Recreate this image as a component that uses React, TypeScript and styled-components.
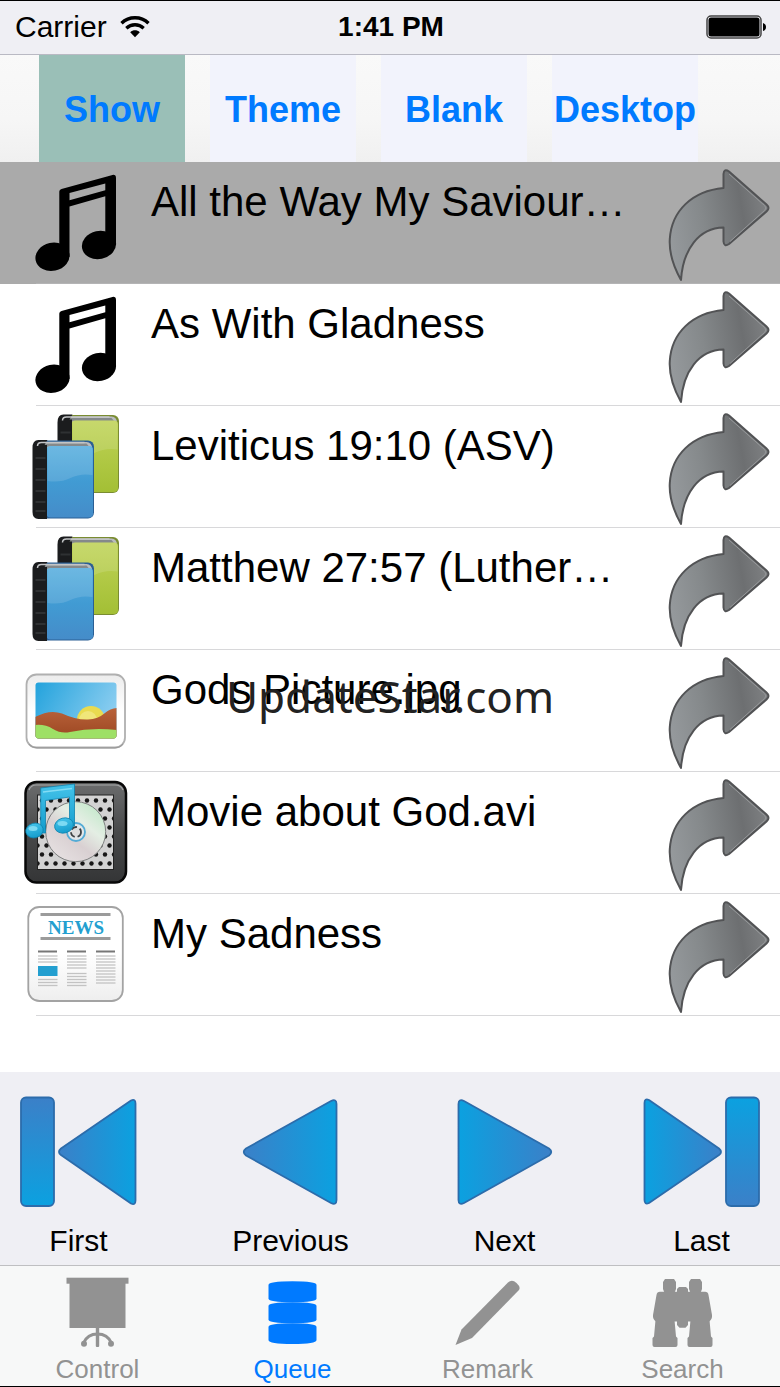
import React from "react";
import styled, { createGlobalStyle } from "styled-components";

const GlobalStyle = createGlobalStyle`
  *, *::before, *::after { box-sizing: border-box; }
  body { margin: 0; background: #fff; }
  button { font: inherit; color: inherit; border: 0; margin: 0; padding: 0; background: none; cursor: pointer; }
  svg { display: block; flex: none; }
`;

const Screen = styled.div`
  position: relative;
  display: flex;
  flex-direction: column;
  min-height: 100vh;
  border-top: 1px solid #000;
  border-bottom: 1px solid #000;
  background: #fff;
  color: #000;
  font-family: "Liberation Sans", Arial, sans-serif;
`;

const StatusBar = styled.header`
  display: grid;
  grid-template-columns: 1fr auto 1fr;
  align-items: center;
  height: 54px;
  padding: 0 13px 2px 15px;
  background: #efeff4;
  border-bottom: 1px solid #b9b9c3;
`;

const Carrier = styled.span`
  display: flex;
  align-items: center;
  gap: 13px;
  font-size: 30px;
  line-height: 36px;
`;

const Clock = styled.time`
  font-size: 28px;
  line-height: 36px;
  font-weight: bold;
`;

const BatterySlot = styled.span`
  justify-self: end;
`;

const ModeBar = styled.nav`
  display: grid;
  grid-template-columns: repeat(4, minmax(0, 146px));
  column-gap: 25px;
  height: 107px;
  padding: 0 39px;
  background: linear-gradient(#f9f9f9, #f6f6f6 60%, #f0f0f0);
`;

const ModeButton = styled.button<{ $active?: boolean }>`
  padding-top: 2px;
  color: #007aff;
  font-size: 36px;
  font-weight: bold;
  background: ${(p) => (p.$active ? "#9abfb7" : "#f2f3fc")};
`;

const Queue = styled.ul`
  flex: 1;
  margin: 0;
  padding: 0 0 56px;
  list-style: none;
`;

const QueueRow = styled.li<{ $selected?: boolean }>`
  position: relative;
  display: flex;
  height: 122px;
  padding: 0 6px 0 16px;
  background: ${(p) => (p.$selected ? "#aaaaaa" : "#fff")};

  &::after {
    content: "";
    position: absolute;
    left: 36px;
    right: 0;
    bottom: 0;
    height: 1px;
    background: ${(p) => (p.$selected ? "#b4b4b5" : "#d8d8da")};
  }
`;

const ItemButton = styled.button`
  flex: 1;
  min-width: 0;
  display: flex;
  align-items: flex-start;
  gap: 15px;
  text-align: left;
`;

const ItemTitle = styled.span`
  padding-top: 16px;
  font-size: 42px;
  line-height: 48px;
  white-space: nowrap;
  overflow: hidden;
  text-overflow: ellipsis;
`;

const Player = styled.section`
  display: grid;
  grid-template-columns: 212fr 214fr 197fr 117fr;
  justify-items: start;
  padding: 24px 20px 6px;
  background: #efeff4;
`;

const PlayerButton = styled.button`
  display: flex;
  flex-direction: column;
  align-items: center;
  gap: 15px;
  font-size: 30px;
  line-height: 36px;
`;

const TabBar = styled.nav`
  display: grid;
  grid-template-columns: repeat(4, 1fr);
  padding: 4px 0 2px;
  background: #f7f8f8;
  border-top: 1px solid #bfbfc2;
`;

const Tab = styled.button<{ $active?: boolean }>`
  display: flex;
  flex-direction: column;
  align-items: center;
  gap: 4px;
  color: ${(p) => (p.$active ? "#007aff" : "#929292")};
  font-size: 26px;
  line-height: 30px;
`;

const Watermark = styled.div`
  position: absolute;
  top: 50%;
  left: 0;
  right: 0;
  transform: translateY(-50%);
  padding-top: 4px;
  text-align: center;
  font-family: "Noto Sans", "Open Sans", sans-serif;
  font-size: 44px;
  line-height: 60px;
  color: #222;
  pointer-events: none;
`;

const WifiIcon = () => (
  <svg width="30" height="24" viewBox="0 0 30 24" fill="none" stroke="#000" aria-hidden="true">
    <path d="M1.500 8.200C9 .9 21 .9 28.500 8.200" strokeWidth="3.400" />
    <path d="M6.300 13.200c5-4.600 12.400-4.600 17.400 0" strokeWidth="3.300" />
    <path d="M10.200 17.200c2.900-2.500 6.700-2.500 9.600 0L15 22.300z" fill="#000" stroke="none" />
  </svg>
);

const BatteryIcon = () => (
  <svg width="61" height="26" viewBox="0 0 61 26" aria-hidden="true">
    <rect x="1" y="2" width="54" height="22" rx="4" fill="#efeff4" stroke="#444" strokeWidth="1.500" />
    <rect x="2.500" y="3.500" width="51" height="19" rx="2.500" />
    <path d="M57 9q3 1 3 4t-3 4z" />
  </svg>
);

const ArrowIcon = () => (
  <svg width="110" height="121" viewBox="664 1 110 121" aria-hidden="true">
    <defs>
      <linearGradient id="arrow" x1="0" y1="0.600" x2="1" y2="0.400">
        <stop offset="0" stopColor="#95999c" />
        <stop offset="0.350" stopColor="#85898b" />
        <stop offset="0.750" stopColor="#6d6f71" />
        <stop offset="1" stopColor="#7e8082" />
      </linearGradient>
    </defs>
    <path
      d="M681 118C672 102 669 90 669.800 77C671.500 49 692 29 723.500 26V12Q724 6 729 9.500L766.500 42.500Q770.500 46 766.500 49.500L729 82Q724 85.500 723.500 79.500V65.500C699 66 683 87 681 118Z"
      fill="url(#arrow)"
      stroke="#525355"
      strokeWidth="2"
      strokeLinejoin="round"
    />
    <path d="M730 79.500L764.500 48.500Q767.500 46 764.500 43.500L729 12" fill="none" stroke="#97999b" strokeWidth="1" />
  </svg>
);

const MusicIcon = () => (
  <svg width="120" height="121" viewBox="16 0 120 121" aria-hidden="true">
    <path
      fillRule="evenodd"
      d="M59.300 29.500Q59.300 27.500 61.500 27L112.500 12.900Q116 12.400 116 15.900V83H105.300V34.200L69.500 44.400V95H59.300ZM69.500 31L105.300 21.600V28.200L69.500 38.200Z"
    />
    <ellipse cx="52.500" cy="94.800" rx="17.200" ry="14" transform="rotate(-12 52.500 94.800)" />
    <ellipse cx="99" cy="83" rx="17.200" ry="14" transform="rotate(-12 99 83)" />
  </svg>
);

const Book = ({ x, y, fill, edge }: { x: number; y: number; fill: string; edge: string }) => (
  <g transform={`translate(${x} ${y})`}>
    <rect x="0.500" y="0.500" width="61" height="78" rx="6" fill={edge} />
    <path d="M5 4Q6 2 9 2H54Q59 2 60 9H5z" fill="#b9bcbe" />
    <path d="M9 3.500H54L57 7H8z" fill="#85898b" />
    <rect x="14" y="6" width="46.500" height="71.500" rx="4" fill={`url(#${fill})`} />
    <path d="M15 41Q28 43 38 38T60 35V11Q60 6 56 6H15z" fill="#fff" opacity="0.130" />
    <path d="M6 0H15L12 5H14.500V79H6Q0 79 0 72V8Q0 0 6 0Z" fill="#1b1c1e" />
    <path d="M3 18H13M3 29H13M3 40H13M3 51H13M3 62H13M3 71H13" stroke="#2f3133" strokeWidth="2" />
    <path d="M5 6Q5 2.500 9 2.500H52" fill="none" stroke="#c3c5c7" strokeWidth="1.500" />
  </g>
);

const BooksIcon = () => (
  <svg width="120" height="121" viewBox="16 0 120 121" aria-hidden="true">
    <defs>
      <linearGradient id="green" x1="0" y1="0" x2="0" y2="1">
        <stop offset="0" stopColor="#bfd356" />
        <stop offset="1" stopColor="#a3bf35" />
      </linearGradient>
      <linearGradient id="blue" x1="0" y1="0" x2="0" y2="1">
        <stop offset="0" stopColor="#56aede" />
        <stop offset="0.500" stopColor="#419bd3" />
        <stop offset="1" stopColor="#458cc9" />
      </linearGradient>
    </defs>
    <Book x={57.5} y={8.5} fill="green" edge="#7a8c31" />
    <Book x={32.5} y={34} fill="blue" edge="#2b5f94" />
  </svg>
);

const PictureIcon = () => (
  <svg width="120" height="121" viewBox="16 0 120 121" aria-hidden="true">
    <defs>
      <linearGradient id="sky" x1="0" y1="0" x2="1" y2="0.400">
        <stop offset="0" stopColor="#22a2dc" />
        <stop offset="1" stopColor="#8acdf0" />
      </linearGradient>
      <linearGradient id="hill" x1="0" y1="0" x2="0" y2="1">
        <stop offset="0" stopColor="#b9623a" />
        <stop offset="1" stopColor="#9a4520" />
      </linearGradient>
      <linearGradient id="frame" x1="0" y1="0" x2="0" y2="1">
        <stop offset="0" stopColor="#ececec" />
        <stop offset="0.500" stopColor="#fff" />
      </linearGradient>
      <clipPath id="photo">
        <rect x="35.500" y="32.500" width="81" height="56" rx="3" />
      </clipPath>
    </defs>
    <rect x="26.500" y="24.500" width="98.500" height="73" rx="10" fill="url(#frame)" stroke="#b0b0b0" strokeWidth="1.800" />
    <path d="M29 94Q32 97.800 37 97.800H115Q120 97.800 123 94" fill="none" stroke="#999" strokeWidth="1.200" />
    <g clipPath="url(#photo)">
      <rect x="35" y="32" width="82" height="57" fill="url(#sky)" />
      <circle cx="91" cy="70" r="14" fill="#e9db50" />
      <circle cx="88" cy="70" r="9" fill="#f0e67a" />
      <path d="M35 67Q50 59 62 63.500Q76 70 88 69.500Q98 69 105 63Q110 58.500 117 58V90H35z" fill="url(#hill)" />
      <path d="M35 75Q45 74 53 79T70 82Q92 77 117 80V90H35z" fill="#9ee065" />
    </g>
  </svg>
);

const MovieIcon = () => (
  <svg width="120" height="121" viewBox="16 0 120 121" aria-hidden="true">
    <defs>
      <linearGradient id="case" x1="0" y1="0" x2="0" y2="1">
        <stop offset="0" stopColor="#6c6d6e" />
        <stop offset="0.500" stopColor="#48494a" />
        <stop offset="1" stopColor="#343536" />
      </linearGradient>
      <linearGradient id="disc" x1="0.900" y1="0" x2="0.100" y2="1">
        <stop offset="0" stopColor="#bce7c5" />
        <stop offset="0.350" stopColor="#e4eee4" />
        <stop offset="0.600" stopColor="#d9d0d2" />
        <stop offset="1" stopColor="#e9e4e5" />
      </linearGradient>
      <linearGradient id="note" x1="0" y1="0" x2="0" y2="1">
        <stop offset="0" stopColor="#44c3ea" />
        <stop offset="1" stopColor="#149ccc" />
      </linearGradient>
      <pattern id="holes" x="37" y="23" width="9" height="18" patternUnits="userSpaceOnUse">
        <rect width="9" height="18" fill="#d2d2d2" />
        <circle cx="5" cy="5.500" r="2.200" fill="#171717" />
        <circle cx="0.500" cy="14.500" r="2.200" fill="#171717" />
        <circle cx="9.500" cy="14.500" r="2.200" fill="#171717" />
      </pattern>
    </defs>
    <rect x="25.500" y="10" width="100.500" height="100.500" rx="11" fill="url(#case)" stroke="#080808" strokeWidth="2.500" />
    <path d="M29 18Q31 13 36 13H115Q121 13 123 18" fill="none" stroke="#a4a5a6" strokeWidth="1.200" />
    <rect x="37.500" y="23" width="76" height="74.500" fill="url(#holes)" stroke="#222" />
    <circle cx="75.700" cy="59.700" r="30" fill="url(#disc)" stroke="#7e8080" />
    <circle cx="76" cy="60" r="9" fill="#e2e7ea" stroke="#54abd5" strokeWidth="1.800" />
    <circle cx="76" cy="60" r="5" fill="#ddd" stroke="#3d4144" strokeWidth="1.800" strokeDasharray="6 3" />
    <g fill="url(#note)" stroke="#0f83ae" strokeWidth="0.800">
      <path d="M40.700 16L74.500 12V54H69.500V25L45.500 28.500V61H40.700z" />
      <ellipse cx="34.500" cy="58.500" rx="8.800" ry="7.300" transform="rotate(-15 34.500 58.500)" />
      <ellipse cx="64" cy="53.500" rx="9.500" ry="7.500" transform="rotate(-15 64 53.500)" />
    </g>
    <path d="M43 20L72 16.500" stroke="#83dcf4" strokeWidth="1.500" />
    <ellipse cx="33" cy="56.500" rx="4.500" ry="2.500" fill="#7ddaf3" />
    <ellipse cx="62.500" cy="51.500" rx="5" ry="2.500" fill="#7ddaf3" />
  </svg>
);

const newsColumns = [
  { x: 38, rows: [62, 65, 68, 85.5, 88.5, 91.5] },
  { x: 67, rows: [62, 65, 68, 71, 74, 79.5, 82.5, 85.5, 88.5, 91.5] },
  { x: 96, rows: [62, 65, 68, 71, 74, 77, 80, 83, 86, 89] },
];

const NewsIcon = () => (
  <svg width="120" height="121" viewBox="16 0 120 121" aria-hidden="true">
    <defs>
      <linearGradient id="paper" x1="0" y1="0" x2="0" y2="1">
        <stop offset="0.500" stopColor="#fff" />
        <stop offset="1" stopColor="#eee" />
      </linearGradient>
    </defs>
    <rect x="28.300" y="13" width="94.500" height="94" rx="11" fill="url(#paper)" stroke="#a3a3a3" strokeWidth="1.800" />
    <path d="M40.500 20.500H110.500M40.500 44.500H110.500" stroke="#9b9b9b" strokeWidth="3" />
    <text x="76" y="40" textAnchor="middle" fontFamily="Liberation Serif, serif" fontWeight="bold" fontSize="19" fill="#239fd0">
      NEWS
    </text>
    {newsColumns.map((column) => (
      <g key={column.x} stroke="#c3c3c3" strokeWidth="1.300">
        <path d={`M${column.x} 57.500h19`} stroke="#777" strokeWidth="2" />
        {column.rows.map((y) => (
          <path key={y} d={`M${column.x} ${y}h19.500`} />
        ))}
      </g>
    ))}
    <rect x="38" y="72" width="19.500" height="10" fill="#239fd0" />
  </svg>
);

const PlayerGradients = () => (
  <defs>
    <linearGradient id="fadeLeft">
      <stop offset="0" stopColor="#3b80c8" />
      <stop offset="1" stopColor="#0ba1e0" />
    </linearGradient>
    <linearGradient id="fadeRight">
      <stop offset="0" stopColor="#0ba1e0" />
      <stop offset="1" stopColor="#3b80c8" />
    </linearGradient>
    <linearGradient id="fadeUp" x1="0" y1="0" x2="0" y2="1">
      <stop offset="0" stopColor="#3b80c8" />
      <stop offset="1" stopColor="#0ba1e0" />
    </linearGradient>
    <linearGradient id="fadeDown" x1="0" y1="0" x2="0" y2="1">
      <stop offset="0" stopColor="#0ba1e0" />
      <stop offset="1" stopColor="#3b80c8" />
    </linearGradient>
  </defs>
);

const PlayerSvg = ({ children }: { children: React.ReactNode }) => (
  <svg width="117" height="112" viewBox="0 0 117 112" stroke="#2c6cab" strokeWidth="1.800" strokeLinejoin="round" aria-hidden="true">
    <PlayerGradients />
    {children}
  </svg>
);

const FirstIcon = () => (
  <PlayerSvg>
    <rect x="1" y="1.500" width="33" height="108.500" rx="5" fill="url(#fadeUp)" />
    <path d="M41 52.500L111 4.500Q115.500 2.500 115.500 7.500V104.500Q115.500 109.500 111 107.500L41 59Q37 56 41 52.500Z" fill="url(#fadeLeft)" />
  </PlayerSvg>
);

const PreviousIcon = () => (
  <PlayerSvg>
    <path d="M14 52.500L99 5Q104.500 2.500 104.500 8V104Q104.500 109.500 99 107L14 59.500Q9.500 56 14 52.500Z" fill="url(#fadeLeft)" />
  </PlayerSvg>
);

const NextIcon = () => (
  <PlayerSvg>
    <path d="M103 52.500L18 5Q12.500 2.500 12.500 8V104Q12.500 109.500 18 107L103 59.500Q107.500 56 103 52.500Z" fill="url(#fadeRight)" />
  </PlayerSvg>
);

const LastIcon = () => (
  <PlayerSvg>
    <rect x="83" y="1.500" width="33" height="108.500" rx="5" fill="url(#fadeDown)" />
    <path d="M76 52.500L6 4Q1.500 2 1.500 7V104Q1.500 109 6 107L76 59Q80 56 76 52.500Z" fill="url(#fadeRight)" />
  </PlayerSvg>
);

const TabSvg = ({ children }: { children: React.ReactNode }) => (
  <svg width="80" height="80" viewBox="1 0 80 80" fill="currentColor" aria-hidden="true">
    {children}
  </svg>
);

const ControlIcon = () => (
  <TabSvg>
    <rect x="9.500" y="7.700" width="62" height="6" />
    <rect x="12.500" y="12" width="56" height="46" />
    <rect x="38.800" y="57" width="3.400" height="20" rx="1" />
    <path d="M26.500 73Q30.500 64 40.500 64T54.500 73" fill="none" stroke="currentColor" strokeWidth="3" />
    <circle cx="27" cy="73.800" r="3" />
    <circle cx="54" cy="73.800" r="3" />
  </TabSvg>
);

const QueueIcon = () => (
  <TabSvg>
    <path d="M16.500 15Q16.500 11.300 40.500 11.300T64.500 15V28.500Q64.500 32.300 40.500 32.300T16.500 28.500Z" />
    <path d="M16.500 36Q16.500 32.300 40.500 32.300T64.500 36V49.500Q64.500 53.300 40.500 53.300T16.500 49.500Z" />
    <path d="M16.500 57Q16.500 53.300 40.500 53.300T64.500 57V70Q64.500 74 40.500 74T16.500 70Z" />
  </TabSvg>
);

const RemarkIcon = () => (
  <TabSvg>
    <path d="M8.500 75L14.500 59.500L61 12.500Q65 9 69.500 13T72 20L25 68Z" />
  </TabSvg>
);

const SearchIcon = () => (
  <TabSvg>
    <path d="M23 9H32L34 12V19L32.500 23H22.500L21 19V12Z" />
    <path d="M49 9H58L60 12V19L58.500 23H48.500L47 19V12Z" />
    <path d="M37 17H44L46 19V24H35V19Z" />
    <path d="M18 21.700H63Q66 21.700 66.500 25L70 45Q70.500 49 67 51.500H14Q10.500 49 11 45L14.500 25Q15 21.700 18 21.700Z" />
    <path d="M13.500 50H32.500L34 66.500L35.500 68V75Q35.500 77 33.500 77H12.500Q10.500 77 10.500 75V68L12 66.500Z" />
    <path d="M48.500 50H67.500L69 66.500L70.500 68V75Q70.500 77 68.500 77H47.500Q45.500 77 45.500 75V68L47 66.500Z" />
    <path d="M35 50H46V55L43.500 57.700H37.500L35 55Z" />
  </TabSvg>
);

const modes = ["Show", "Theme", "Blank", "Desktop"];

const items = [
  { title: "All the Way My Saviour…", Icon: MusicIcon },
  { title: "As With Gladness", Icon: MusicIcon },
  { title: "Leviticus 19:10 (ASV)", Icon: BooksIcon },
  { title: "Matthew 27:57 (Luther…", Icon: BooksIcon },
  { title: "Gods Picture.jpg", Icon: PictureIcon },
  { title: "Movie about God.avi", Icon: MovieIcon },
  { title: "My Sadness", Icon: NewsIcon },
];

const playerActions = [
  { label: "First", Icon: FirstIcon },
  { label: "Previous", Icon: PreviousIcon },
  { label: "Next", Icon: NextIcon },
  { label: "Last", Icon: LastIcon },
];

const tabs = [
  { label: "Control", Icon: ControlIcon },
  { label: "Queue", Icon: QueueIcon },
  { label: "Remark", Icon: RemarkIcon },
  { label: "Search", Icon: SearchIcon },
];

export default function App() {
  return (
    <>
      <GlobalStyle />
      <Screen>
        <StatusBar>
          <Carrier>
            Carrier
            <WifiIcon />
          </Carrier>
          <Clock>1:41 PM</Clock>
          <BatterySlot>
            <BatteryIcon />
          </BatterySlot>
        </StatusBar>
        <ModeBar>
          {modes.map((mode, i) => (
            <ModeButton key={mode} $active={i === 0}>
              {mode}
            </ModeButton>
          ))}
        </ModeBar>
        <Queue>
          {items.map(({ title, Icon }, i) => (
            <QueueRow key={title} $selected={i === 0}>
              <ItemButton>
                <Icon />
                <ItemTitle>{title}</ItemTitle>
              </ItemButton>
              <button aria-label={`Send ${title}`}>
                <ArrowIcon />
              </button>
            </QueueRow>
          ))}
        </Queue>
        <Player>
          {playerActions.map(({ label, Icon }) => (
            <PlayerButton key={label}>
              <Icon />
              {label}
            </PlayerButton>
          ))}
        </Player>
        <TabBar>
          {tabs.map(({ label, Icon }) => (
            <Tab key={label} $active={label === "Queue"}>
              <Icon />
              {label}
            </Tab>
          ))}
        </TabBar>
        <Watermark>UpdateStar.com</Watermark>
      </Screen>
    </>
  );
}
